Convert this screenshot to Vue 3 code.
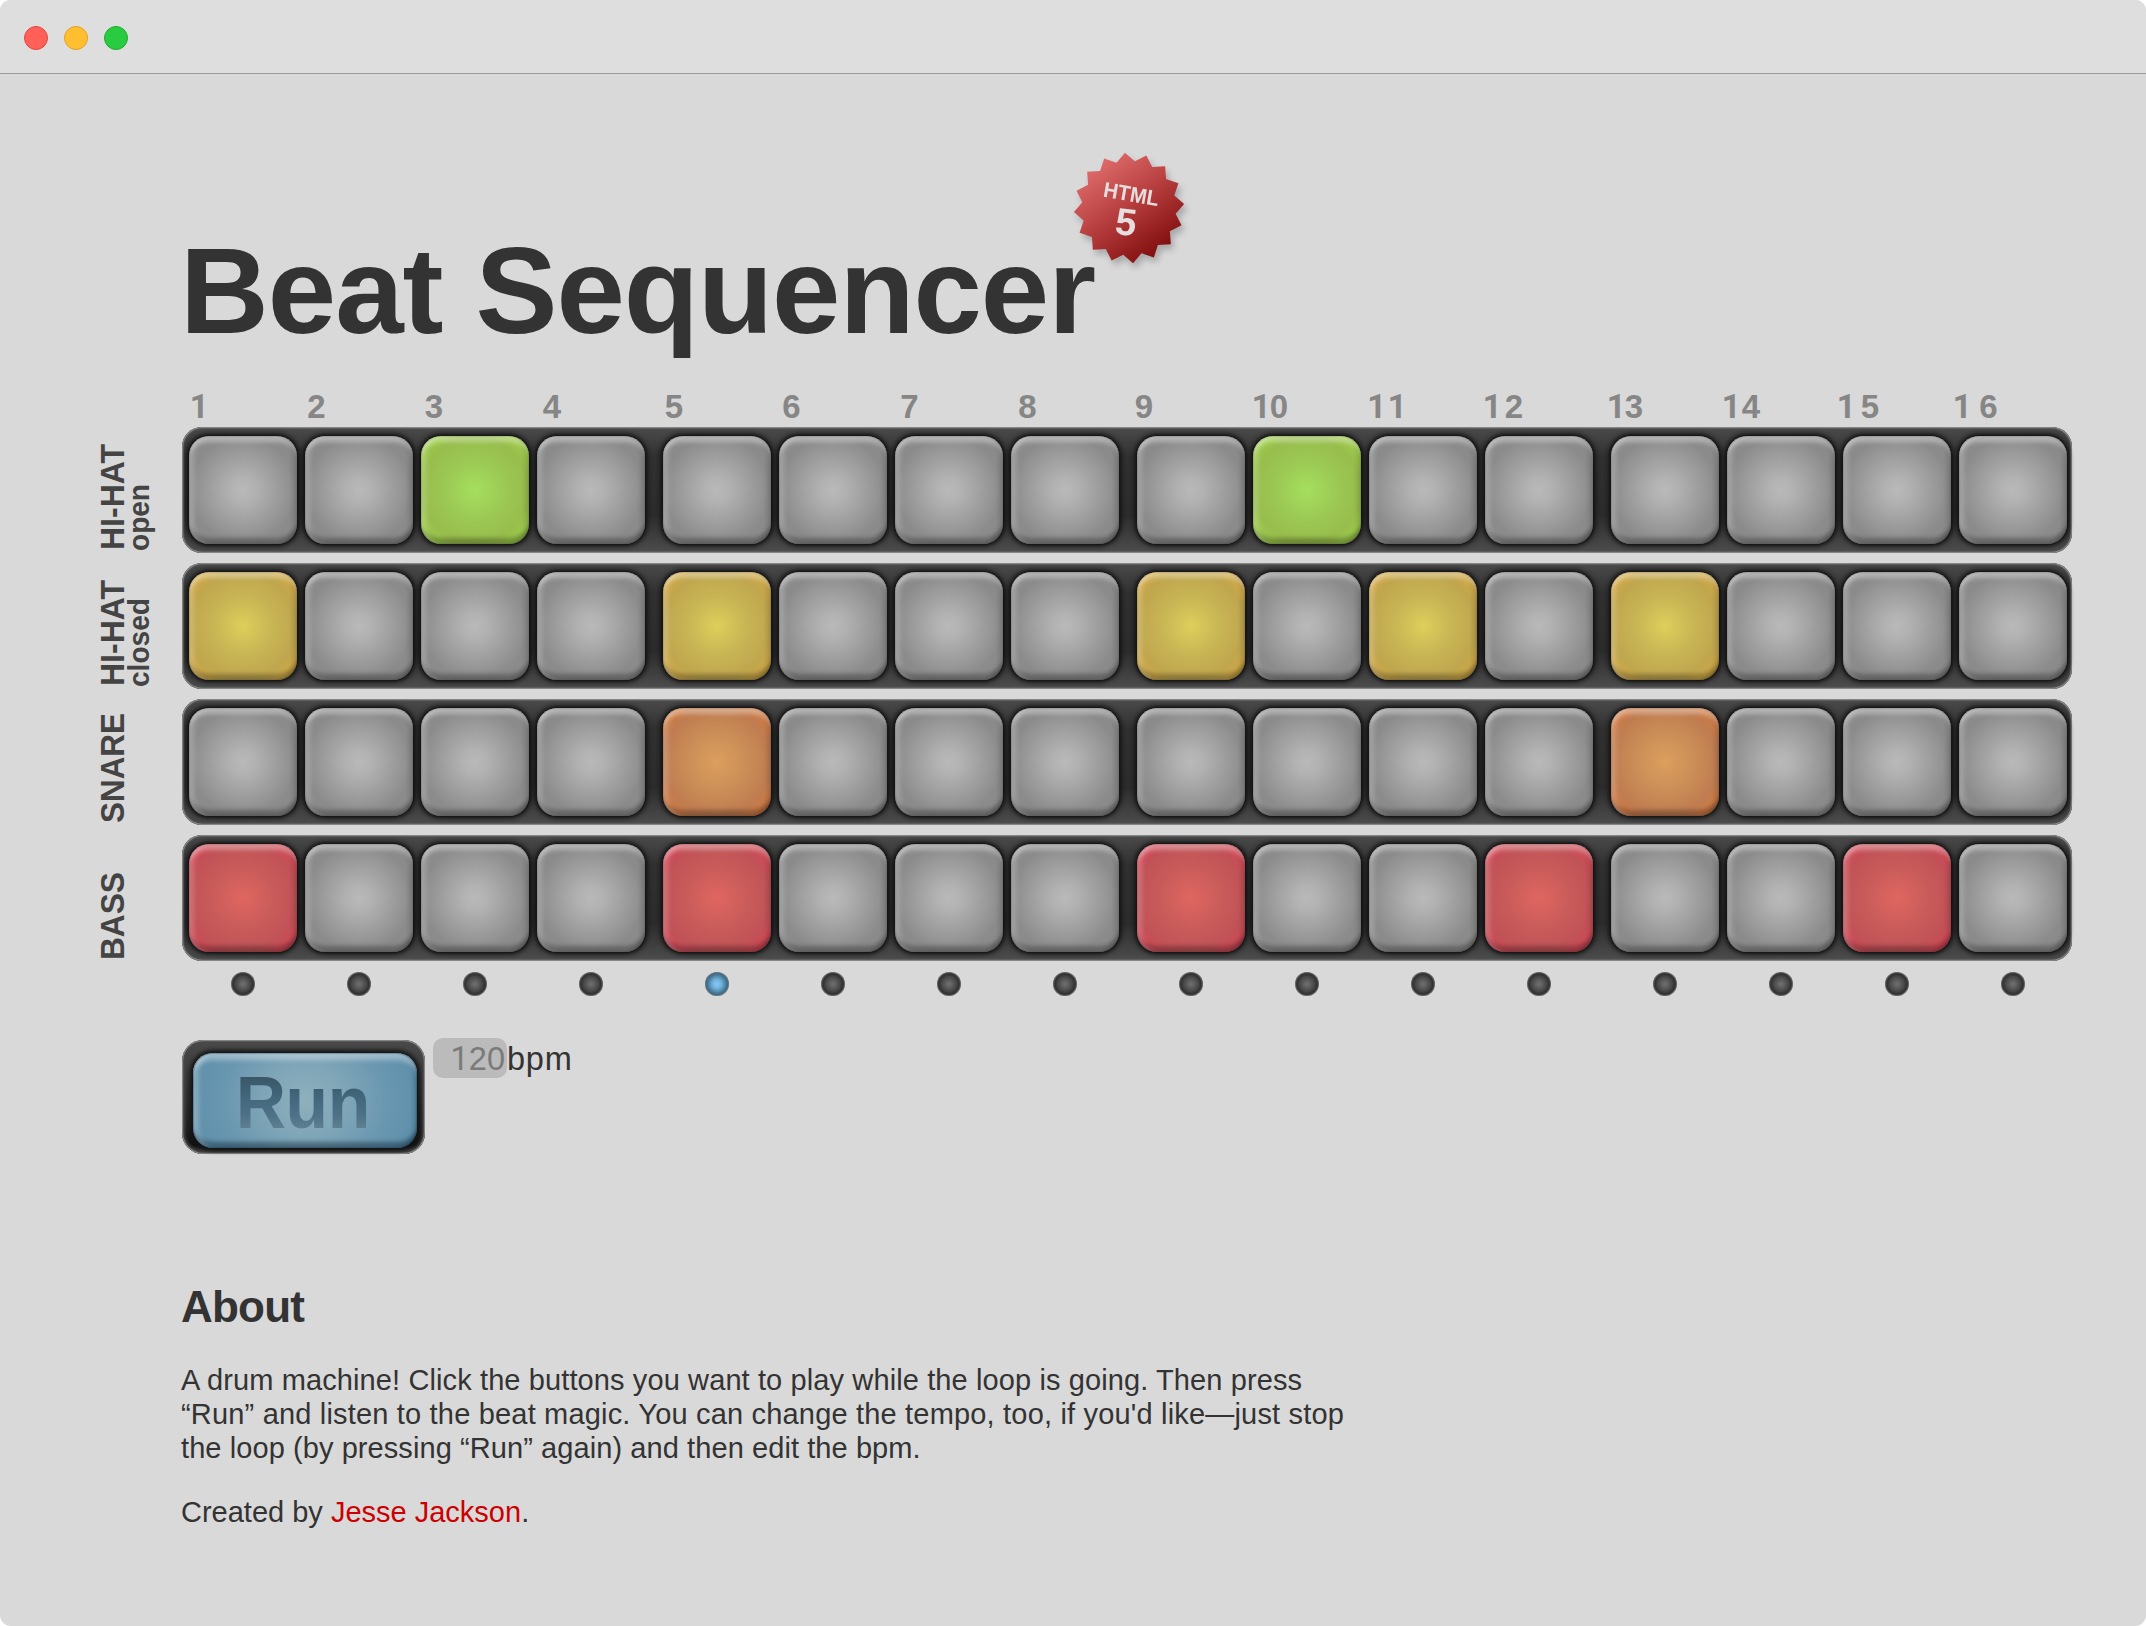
<script setup>
const steps = Array.from({ length: 16 }, (_, i) => i)
const beatNumbers = [
  { digits: '1', x: 1 }, { digits: '2', x: 2.5 }, { digits: '3', x: 4 }, { digits: '4', x: 6 },
  { digits: '5', x: 2 }, { digits: '6', x: 3.5 }, { digits: '7', x: 5.5 }, { digits: '8', x: 7.5 },
  { digits: '9', x: -2 }, { digits: '10', x: -1, gap: 0 }, { digits: '11', x: -1.5, gap: 2.5 },
  { digits: '12', x: -2, gap: 4 }, { digits: '13', x: -4, gap: 0 }, { digits: '14', x: -5, gap: 2 },
  { digits: '15', x: -6, gap: 6 }, { digits: '16', x: -6, gap: 8.5 },
]
const tracks = [
  { id: 'open', name: 'HI-HAT', sub: 'open', length: 106, subLength: 67, start: 123, on: [2, 9] },
  { id: 'closed', name: 'HI-HAT', sub: 'closed', length: 106, subLength: 89, start: 123, on: [0, 4, 8, 10, 12] },
  { id: 'snare', name: 'SNARE', length: 110, start: 124, on: [4, 12] },
  { id: 'bass', name: 'BASS', length: 88, start: 125, on: [0, 4, 8, 11, 14] },
]
const activeStep = 4
const lines = [
  'A drum machine! Click the buttons you want to play while the loop is going. Then press',
  '“Run” and listen to the beat magic. You can change the tempo, too, if you\'d like—just stop',
  'the loop (by pressing “Run” again) and then edit the bpm.',
]
const starPoints = Array.from({ length: 32 }, (_, i) => {
  const r = i % 2 ? 47 : 55.3
  const a = ((i * 11.25 - 4.2) * Math.PI) / 180
  return `${(60 + r * Math.sin(a)).toFixed(2)},${(60 - r * Math.cos(a)).toFixed(2)}`
}).join(' ')
</script>

<template>
  <div class="window">
    <header class="titlebar">
      <i class="light close"></i><i class="light minimise"></i><i class="light expand"></i>
    </header>
    <main>
      <div class="heading">
        <h1>Beat Sequencer</h1>
        <svg class="badge" width="130" height="130" viewBox="0 0 130 130">
          <defs>
            <linearGradient id="seal" x1="0.2" y1="0.08" x2="0.8" y2="0.92">
              <stop offset="0" stop-color="#df6c6c" />
              <stop offset="0.5" stop-color="#b53c3c" />
              <stop offset="1" stop-color="#7f0c0c" />
            </linearGradient>
          </defs>
          <polygon :points="starPoints" fill="url(#seal)" />
          <text x="0" y="0" transform="translate(33.5 48.5) rotate(10)" font-size="21.5" textLength="56" lengthAdjust="spacingAndGlyphs">HTML</text>
          <text x="0" y="0" transform="translate(45 85.8) rotate(7)" font-size="38">5</text>
        </svg>
      </div>

      <div class="steps numbers">
        <div v-for="(n, i) in beatNumbers" :key="i" class="cell">
          <span class="number" :style="{ marginLeft: n.x + 'px' }">
            <b v-for="(d, k) in n.digits" :key="k" :class="{ one: d === '1' }" :style="{ marginLeft: k ? n.gap + 'px' : '0' }">{{ d }}</b>
          </span>
        </div>
      </div>

      <div v-for="t in tracks" :key="t.id" class="track">
        <svg class="label" width="92" height="126" viewBox="0 0 92 126">
          <text :transform="`translate(34 ${t.start}) rotate(-90)`" font-size="34" :textLength="t.length" lengthAdjust="spacingAndGlyphs">{{ t.name }}</text>
          <text v-if="t.sub" :transform="`translate(58.5 ${t.start + 1}) rotate(-90)`" font-size="29" :textLength="t.subLength" lengthAdjust="spacingAndGlyphs">{{ t.sub }}</text>
        </svg>
        <div class="tray steps">
          <div v-for="s in steps" :key="s" class="cell">
            <button class="pad" :class="t.on.includes(s) ? t.id : 'off'"></button>
          </div>
        </div>
      </div>

      <div class="steps leds">
        <div v-for="s in steps" :key="s" class="cell">
          <i class="led" :class="{ lit: s === activeStep }"></i>
        </div>
      </div>

      <div class="controls">
        <div class="run-tray"><button class="run"><span>Run</span></button></div>
        <div class="tempo"><span class="bpm"><b class="one">1</b>20</span><span class="unit">bpm</span></div>
      </div>

      <section class="about">
        <h2>About</h2>
        <p><span v-for="(l, i) in lines" :key="i" class="line" :class="'line-' + i">{{ l }}</span></p>
        <p class="credit">Created by <a>Jesse Jackson</a>.</p>
      </section>
    </main>
  </div>
</template>

<style>
body { background: #fff; }
</style>

<style scoped>
* { box-sizing: border-box; }
.window {
  width: 2146px;
  height: 1626px;
  overflow: hidden;
  border-radius: 11px;
  background: #d9d9d9;
  color: #333;
  font-family: "Liberation Sans", Arial, sans-serif;
}
.titlebar {
  height: 74px;
  display: flex;
  gap: 16px;
  padding: 26px 24px 0;
  background: #dedede;
  border-bottom: 1px solid #999;
}
.light { width: 24px; height: 24px; border-radius: 50%; border: 1px solid; }
.close { background: #ff6159; border-color: #e2463f; }
.minimise { background: #ffbf2f; border-color: #e0a028; }
.expand { background: #29cc41; border-color: #1dad2b; }
main { padding: 144px 0 0 90px; }
.heading { position: relative; height: 169px; padding: 1px 0 0 90px; }
h1 { margin: 0; font-size: 123px; line-height: 144px; letter-spacing: -1.05px; white-space: nowrap; }
.badge {
  position: absolute;
  left: 978.6px;
  top: -70.4px;
  filter: drop-shadow(3px 5px 3px rgba(0, 0, 0, 0.22));
}
.badge text { fill: #e6dede; font-family: "Liberation Sans", Arial, sans-serif; font-weight: bold; }

.steps { display: flex; width: 1890px; padding-left: 6.7px; }
.cell { width: 116px; flex: none; }
.cell:nth-child(4n):not(:last-child) { margin-right: 10px; }
.numbers { margin-left: 92px; height: 40px; }
.number { display: flex; width: max-content; color: #868686; font-size: 33px; line-height: 40px; }
.number b { width: 18px; }
.one { font-family: Roboto, Inter, sans-serif; }

.track { display: flex; margin-bottom: 10px; height: 126px; }
.label { flex: none; }
.label text { font-family: "Liberation Sans", Arial, sans-serif; font-weight: bold; fill: #444; }
.tray {
  height: 126px;
  padding-top: 9px;
  border-radius: 20px;
  background: linear-gradient(#4b4b4b 0, #303030 24%, #2c2c2c 70%, #4d4d4d 100%);
  box-shadow: inset 0 0 0 1.2px #858585, inset 0 0 2px 2px #555;
}
.pad {
  display: block;
  width: 108.4px;
  height: 108.4px;
  padding: 0;
  border: 0;
  border-radius: 20px;
  box-shadow:
    0 0 2px 1px #151515,
    0 0 4px 3px rgba(18, 18, 18, 0.75),
    inset 0 0 1px 0.5px rgba(60, 60, 60, 0.3),
    inset 0 10px 4px -4px rgba(255, 255, 255, 0.34),
    inset 9px 0 5px -4px rgba(255, 255, 255, 0.2),
    inset 0 -9px 4px -3px rgba(0, 0, 0, 0.28),
    inset -7px 0 4px -3px rgba(0, 0, 0, 0.13);
}
.pad.off { background: radial-gradient(circle, #b9b9b9 0, #b2b2b2 16%, #8b8b8b 70%); }
.pad.open { background: radial-gradient(circle, #a5df5e 0, #9bc753 42%, #98bd4c 70%, #a3dc4c 100%); }
.pad.closed { background: radial-gradient(circle, #ddcf5b 0, #c7b454 40%, #c0a64e 70%, #deaa40 100%); }
.pad.snare { background: radial-gradient(circle, #dc9f5d 0, #ca8d57 40%, #c07c50 70%, #dc7939 100%); }
.pad.bass { background: radial-gradient(circle, #e06660 0, #c95c5a 40%, #c15257 70%, #de4056 100%); }

.leds { margin-left: 92px; height: 68px; padding-top: 1px; }
.led {
  display: block;
  width: 24px;
  height: 24px;
  margin-left: 42.3px;
  border-radius: 50%;
  background: radial-gradient(circle, #717171 0, #4b4b4b 40%, #303030 60%, #3d3d3d 70%);
  box-shadow: inset 0 0 1px 1px rgba(170, 170, 170, 0.4);
}
.led.lit { background: radial-gradient(circle, #85c9f4 0, #71b4df 25%, #3d6984 62%, #365568 70%); }

.controls { display: flex; height: 243px; margin-left: 91.5px; }
.run-tray {
  width: 243.5px;
  height: 114px;
  margin-top: 1px;
  padding: 12.5px 0 0 11.5px;
  border-radius: 21px;
  background: linear-gradient(#4b4b4b, #222 75%, #111 92%, #444);
  box-shadow: inset 0 0 0 1.2px #858585, inset 0 0 3px 3px #484848;
}
.run {
  display: block;
  width: 224px;
  height: 95px;
  padding: 0;
  border: 0;
  border-radius: 20px;
  background: radial-gradient(ellipse 112px 100px, #8fb0bd 0, #7ea5b7 38%, #6a97b0 72%, #5f90ab 100%);
  box-shadow:
    0 0 4px 3px #131313,
    inset 0 0 1px 1px rgba(30, 60, 80, 0.35),
    inset 0 11px 5px -4px rgba(255, 255, 255, 0.36),
    inset 10px 0 5px -4px rgba(255, 255, 255, 0.24),
    inset 0 -9px 4px -3px rgba(0, 20, 35, 0.4),
    inset -6px 0 4px -3px rgba(0, 20, 35, 0.2);
}
.run span {
  display: block;
  padding: 2px 0 0 46px;
  font: bold 75px/95px "Liberation Sans", Arial, sans-serif;
  letter-spacing: -0.6px;
  text-align: left;
  transform: scaleX(0.93);
  transform-origin: 0 50%;
  background: linear-gradient(#3a5666 24%, #42667b 45%, #4f7288 65%, #668795 84%);
  -webkit-background-clip: text;
  background-clip: text;
  color: transparent;
}
.tempo { display: flex; height: 40px; margin: -1px 0 0 8px; font-size: 32.5px; line-height: 42px; }
.bpm { width: 74px; padding-right: 2px; text-align: right; border-radius: 10px; background: #bbb; color: #7a7a7a; }
.bpm .one { font-weight: normal; }
.unit { letter-spacing: 0.8px; }

.about { margin-left: 91px; }
h2 { margin: 0; font-size: 44px; line-height: 50px; letter-spacing: -0.8px; }
p { margin: 31px 0 0; font-size: 29px; line-height: 34px; white-space: nowrap; }
.line { display: block; }
.line-0 { letter-spacing: 0.11px; }
.line-1 { letter-spacing: 0.18px; }
.line-2 { letter-spacing: 0.08px; }
.credit { margin-top: 30px; }
a { color: #c00; }
</style>
